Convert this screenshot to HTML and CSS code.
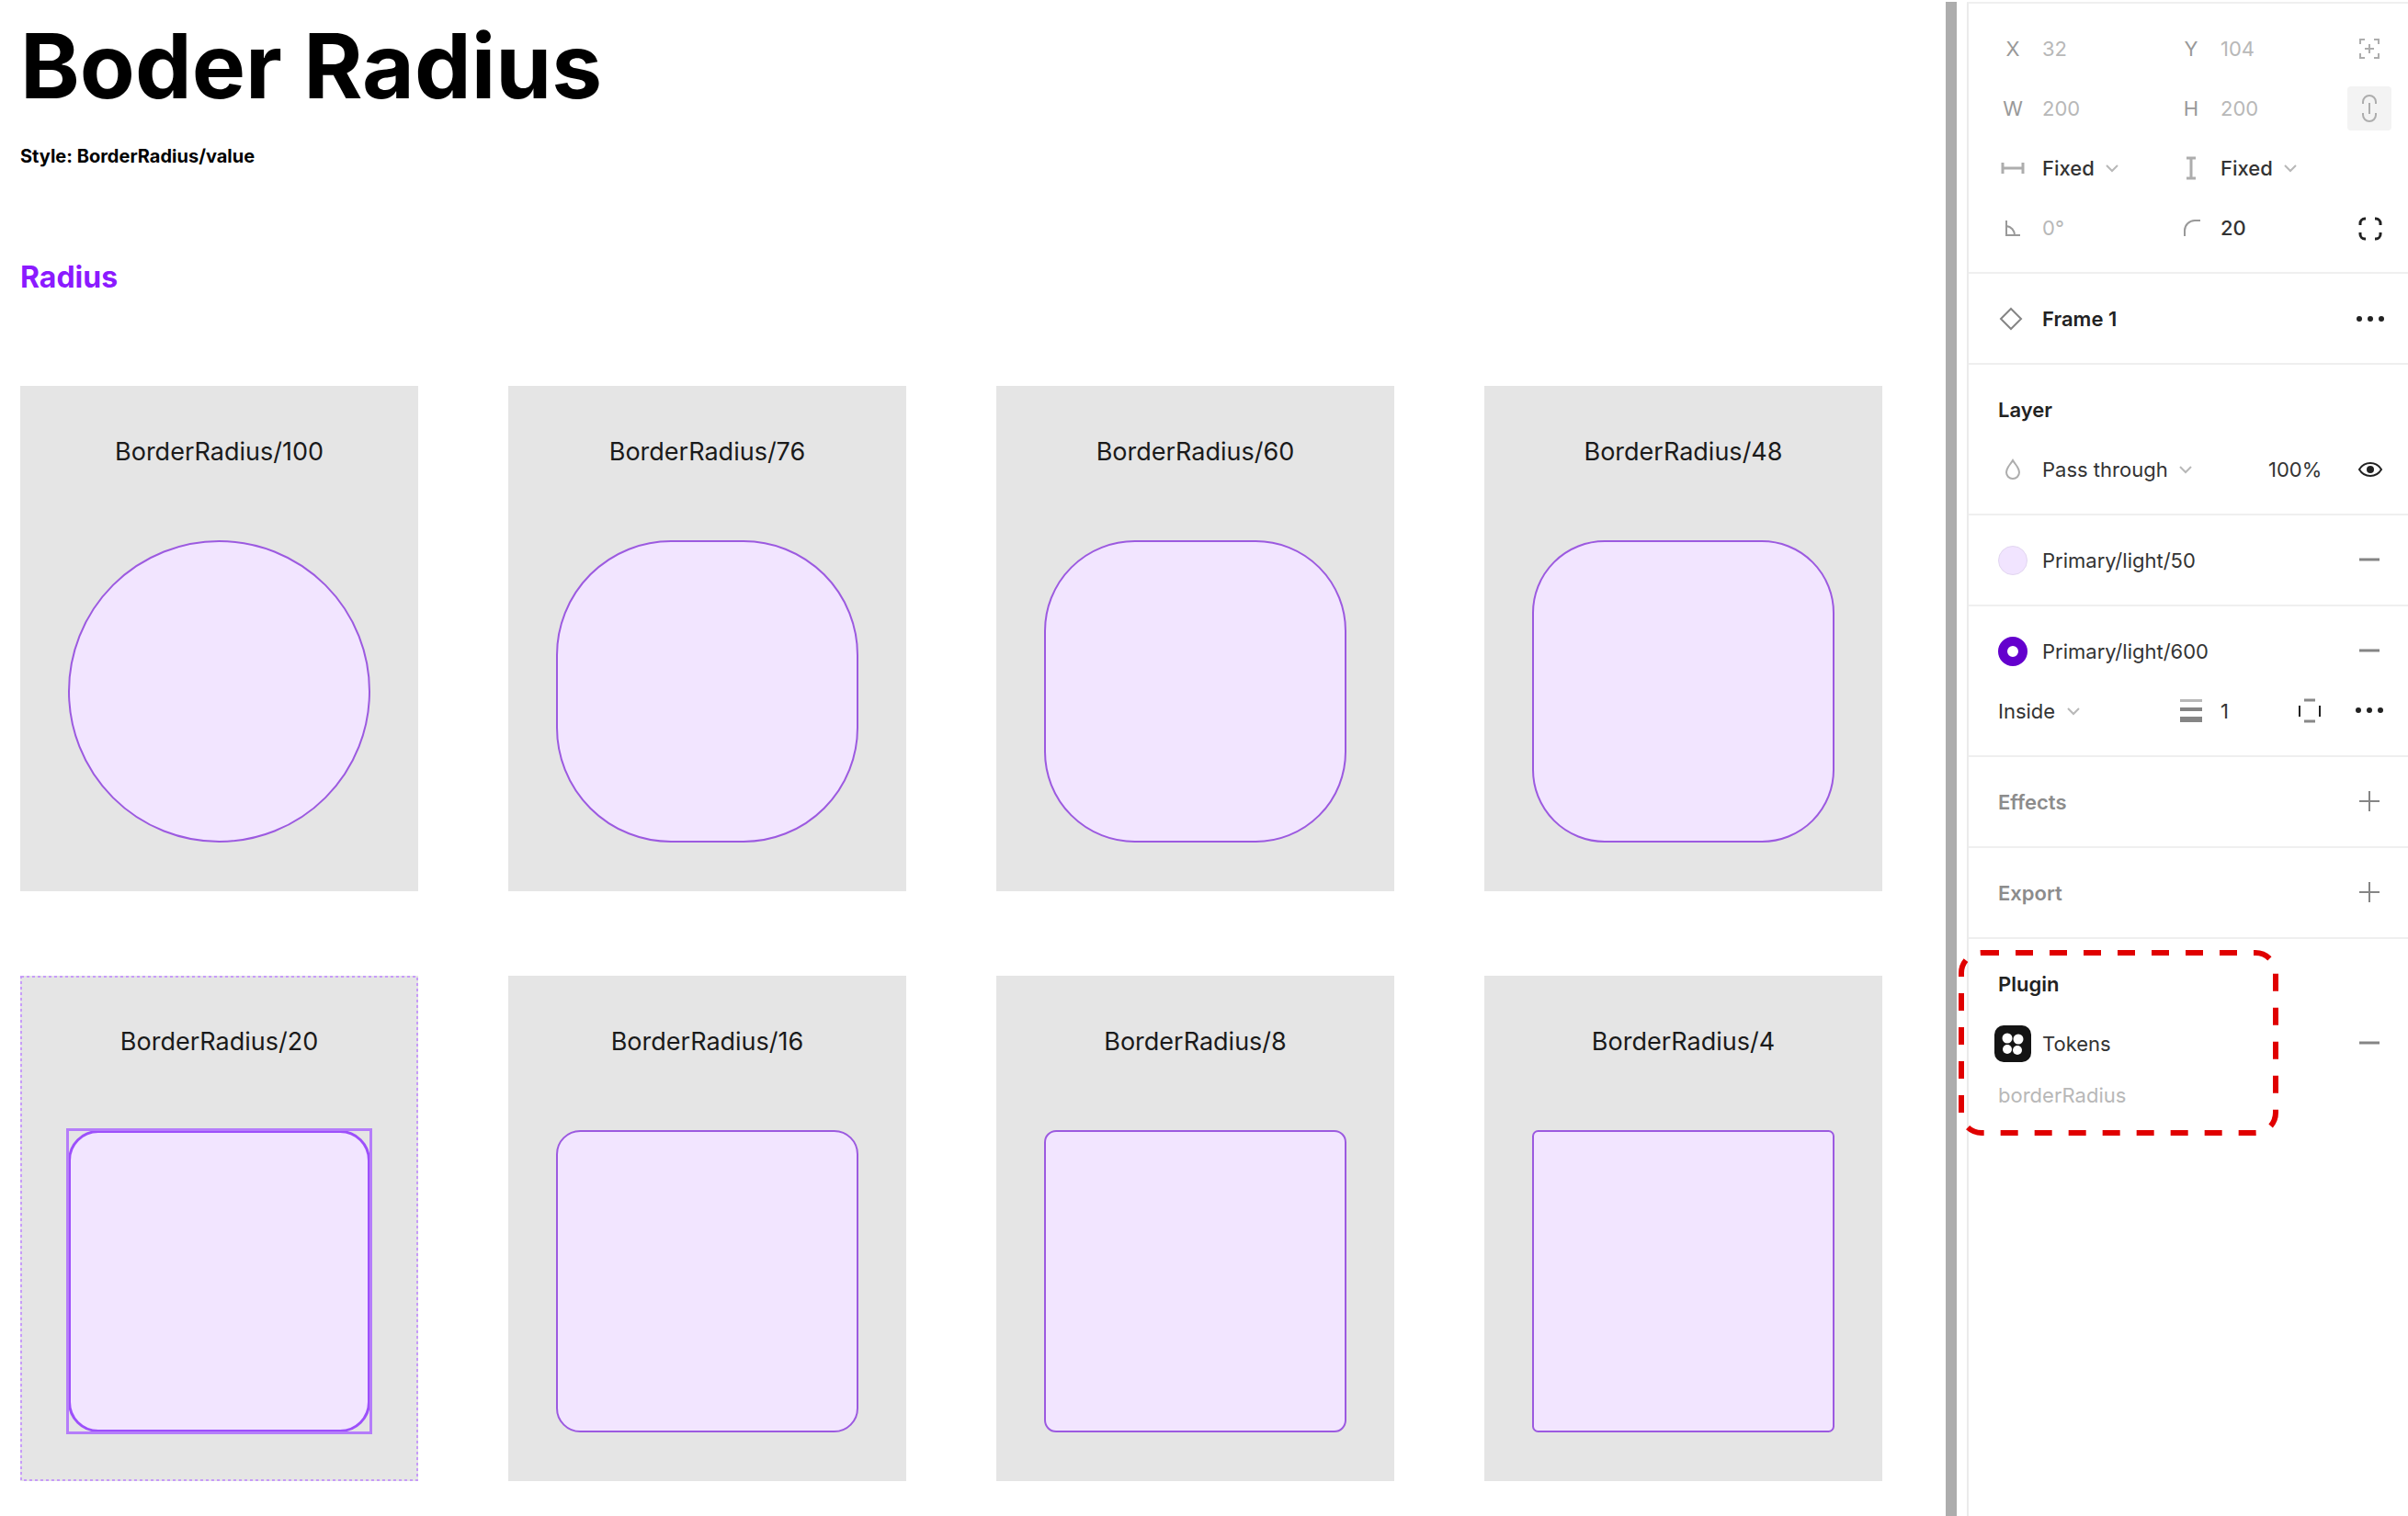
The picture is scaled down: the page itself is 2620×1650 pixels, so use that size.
FILE: index.html
```html
<!DOCTYPE html>
<html lang="en">
<head>
<meta charset="utf-8">
<meta name="viewport" content="width=device-width, initial-scale=1">
<title>Boder Radius</title>
<link rel="stylesheet" href="styles.css">
</head>
<body>
<div class="workspace">
  <main class="canvas">
    <h1 class="title">Boder Radius</h1>
    <p class="style-name">Style: BorderRadius/value</p>
    <h2 class="group-title">Radius</h2>
    <div class="cards">
      <article class="card"><h3 class="card-label">BorderRadius/100</h3><div class="shape r100"></div></article>
      <article class="card"><h3 class="card-label">BorderRadius/76</h3><div class="shape r76"></div></article>
      <article class="card"><h3 class="card-label">BorderRadius/60</h3><div class="shape r60"></div></article>
      <article class="card"><h3 class="card-label">BorderRadius/48</h3><div class="shape r48"></div></article>
      <article class="card card-selected">
        <h3 class="card-label">BorderRadius/20</h3>
        <div class="selection"><div class="shape shape-selected r20"></div></div>
        <svg class="card-outline" aria-hidden="true"><rect x="1" y="1"/></svg>
      </article>
      <article class="card"><h3 class="card-label">BorderRadius/16</h3><div class="shape r16"></div></article>
      <article class="card"><h3 class="card-label">BorderRadius/8</h3><div class="shape r8"></div></article>
      <article class="card"><h3 class="card-label">BorderRadius/4</h3><div class="shape r4"></div></article>
    </div>
  </main>
  <div class="divider"></div>
  <aside class="panel">
    <section class="section">
      <div class="row">
        <label class="field"><span class="mark">X</span><input class="value muted" value="32"></label>
        <label class="field"><span class="mark">Y</span><input class="value muted" value="104"></label>
        <button class="icon-button faint" aria-label="Absolute position"><svg class="icon" viewBox="0 0 48 48"><path d="M14 19v-5h5M29 14h5v5M34 29v5h-5M19 34h-5v-5M24 19v10M19 24h10"/></svg></button>
      </div>
      <div class="row">
        <label class="field"><span class="mark">W</span><input class="value muted" value="200"></label>
        <label class="field"><span class="mark">H</span><input class="value muted" value="200"></label>
        <button class="icon-button faint pressed" aria-label="Constrain proportions"><svg class="icon" viewBox="0 0 48 48"><path d="M17 19v-2a7 7 0 0 1 14 0v2M17 29v2a7 7 0 0 0 14 0v-2M24 18v12"/></svg></button>
      </div>
      <div class="row">
        <div class="field">
          <svg class="icon faint thick" viewBox="0 0 48 48"><path d="M13 18v12M35 18v12M13 24h22"/></svg>
          <select class="value choice" aria-label="Horizontal resizing"><option>Fixed</option></select>
          <svg class="chevron" viewBox="0 0 14 10"><path d="M1 2l6 6 6-6"/></svg>
        </div>
        <div class="field">
          <svg class="icon faint thick" viewBox="0 0 48 48"><path d="M19 13h10M19 35h10M24 13v22"/></svg>
          <select class="value choice" aria-label="Vertical resizing"><option>Fixed</option></select>
          <svg class="chevron" viewBox="0 0 14 10"><path d="M1 2l6 6 6-6"/></svg>
        </div>
      </div>
      <div class="row">
        <div class="field"><svg class="icon gray" viewBox="0 0 48 48"><path d="M17 16v16h15M17 22a10 10 0 0 1 9 10"/></svg><input class="value muted" aria-label="Rotation" value="0°"></div>
        <div class="field"><svg class="icon gray" viewBox="0 0 48 48"><path d="M17 33v-6a11 11 0 0 1 11-11h6"/></svg><input class="value medium" aria-label="Corner radius" value="20"></div>
        <button class="icon-button dark" aria-label="Independent corners"><svg class="icon thick" viewBox="0 0 48 48"><path d="M14 21v-2a5 5 0 0 1 5-5h1M30 14h1a5 5 0 0 1 5 5v2M36 29v2a5 5 0 0 1-5 5h-1M20 36h-1a5 5 0 0 1-5-5v-2"/></svg></button>
      </div>
    </section>

    <section class="section">
      <div class="row">
        <div class="field wide"><svg class="icon mid" viewBox="0 0 48 48"><path d="M22 13l11 11-11 11-11-11z"/></svg><h2 class="name">Frame 1</h2></div>
        <button class="icon-button dark" aria-label="Component options"><svg class="icon solid" viewBox="0 0 48 48"><circle cx="13" cy="24" r="3"/><circle cx="25" cy="24" r="3"/><circle cx="37" cy="24" r="3"/></svg></button>
      </div>
    </section>

    <section class="section">
      <div class="row"><h2 class="heading">Layer</h2></div>
      <div class="row">
        <div class="field wide">
          <svg class="icon faint" viewBox="0 0 48 48"><path d="M24 14c3 5 7 8 7 13a7 7 0 0 1-14 0c0-5 4-8 7-13z"/></svg>
          <select class="value choice regular" aria-label="Blend mode"><option>Pass through</option></select>
          <svg class="chevron" viewBox="0 0 14 10"><path d="M1 2l6 6 6-6"/></svg>
          <input class="value opacity" aria-label="Opacity" value="100%">
        </div>
        <button class="icon-button dark" aria-label="Toggle visibility"><svg class="icon" viewBox="0 0 48 48"><path d="M13 24c3-5 7-7 12-7s9 2 12 7c-3 5-7 7-12 7s-9-2-12-7z"/><circle class="dot" cx="25" cy="24" r="4"/></svg></button>
      </div>
    </section>

    <section class="section">
      <div class="row">
        <div class="field wide"><span class="swatch"><span class="fill-color"></span></span><span class="value">Primary/light/50</span></div>
        <button class="icon-button mid" aria-label="Remove fill"><svg class="icon minus" viewBox="0 0 48 48"><path d="M13 23h22"/></svg></button>
      </div>
    </section>

    <section class="section">
      <div class="row">
        <div class="field wide"><span class="swatch"><span class="stroke-color"></span></span><span class="value">Primary/light/600</span></div>
        <button class="icon-button mid" aria-label="Remove stroke"><svg class="icon minus" viewBox="0 0 48 48"><path d="M13 23h22"/></svg></button>
      </div>
      <div class="row">
        <div class="field inset">
          <select class="value choice regular" aria-label="Stroke position"><option>Inside</option></select>
          <svg class="chevron" viewBox="0 0 14 10"><path d="M1 2l6 6 6-6"/></svg>
        </div>
        <div class="field stroke-field">
          <svg class="icon solid mid" viewBox="0 0 48 48"><path class="light" d="M12 11h24v3H12z"/><path d="M12 20h24v4H12zM12 30h24v6H12z"/></svg>
          <input class="value" aria-label="Stroke weight" value="1">
          <button class="icon-button dark" aria-label="Stroke per side"><svg class="icon" viewBox="0 0 48 48"><path d="M13 18v12M35 18v12"/><path class="soft" d="M18 12h12M18 35h12"/></svg></button>
        </div>
        <button class="icon-button dark" aria-label="Stroke options"><svg class="icon solid" viewBox="0 0 48 48"><circle cx="12" cy="23" r="3"/><circle cx="24" cy="23" r="3"/><circle cx="36" cy="23" r="3"/></svg></button>
      </div>
    </section>

    <section class="section">
      <div class="row">
        <h2 class="heading inactive">Effects</h2>
        <button class="icon-button mid" aria-label="Add effect"><svg class="icon" viewBox="0 0 48 48"><path d="M24 12v22M13 23h22"/></svg></button>
      </div>
    </section>

    <section class="section">
      <div class="row">
        <h2 class="heading inactive">Export</h2>
        <button class="icon-button mid" aria-label="Add export"><svg class="icon" viewBox="0 0 48 48"><path d="M24 12v22M13 23h22"/></svg></button>
      </div>
    </section>

    <section class="section plugin">
      <div class="row"><h2 class="heading">Plugin</h2></div>
      <div class="row">
        <div class="field wide">
          <svg class="icon logo" viewBox="0 0 48 48"><rect x="4" y="4" width="40" height="40" rx="10"/><g><circle cx="18" cy="18" r="5.5"/><circle cx="30" cy="19" r="5.5"/><circle cx="18" cy="30" r="5"/><circle cx="29" cy="31" r="5"/></g></svg>
          <span class="value">Tokens</span>
        </div>
        <button class="icon-button mid" aria-label="Remove plugin data"><svg class="icon minus" viewBox="0 0 48 48"><path d="M13 23h22"/></svg></button>
      </div>
      <p class="plugin-note">borderRadius</p>
      <svg class="callout" viewBox="0 0 348 202" aria-hidden="true"><rect x="3" y="3" width="342" height="196" rx="22"/></svg>
    </section>
  </aside>
</div>
</body>
</html>
```

FILE: styles.css
```css
* {
  box-sizing: border-box;
}

body {
  margin: 0;
  background: #fff;
  color: #000;
  font-family: Inter, "Liberation Sans", sans-serif;
}

h1, h2, h3, p {
  margin: 0;
}

.workspace {
  display: grid;
  grid-template-columns: minmax(0, 1fr) 12px 491px;
  min-height: 100vh;
}

/* Canvas */

.canvas {
  padding: 12px 69px 36px 22px;
}

.title {
  font-size: 98px;
  line-height: 120px;
  font-weight: 700;
}

.style-name {
  margin-top: 24px;
  font-size: 20px;
  line-height: 28px;
  font-weight: 700;
}

.group-title {
  margin-top: 98px;
  color: #8b1aff;
  font-size: 32px;
  line-height: 40px;
  font-weight: 700;
}

.cards {
  display: grid;
  grid-template-columns: repeat(4, minmax(0, 1fr));
  gap: 92px 98px;
  margin-top: 98px;
}

.card {
  padding: 52px 52px 53px;
  background: #e5e5e5;
}

.card-label {
  margin-bottom: 76px;
  color: #1a1a1a;
  font-size: 27px;
  line-height: 40px;
  font-weight: 400;
  text-align: center;
}

.shape {
  aspect-ratio: 1;
  border: 2px solid #9c5ae0;
  background: #f2e5ff;
}

.r100 { border-radius: 50%; }
.r76 { border-radius: 38%; }
.r60 { border-radius: 30%; }
.r48 { border-radius: 24%; }
.r20 { border-radius: 10%; }
.r16 { border-radius: 8%; }
.r8 { border-radius: 4%; }
.r4 { border-radius: 2%; }

.card-selected {
  position: relative;
}

.selection {
  outline: 3px solid #b57dfa;
  outline-offset: -1px;
}

.shape-selected {
  border: 3px solid #9d50fb;
}

.card-outline {
  position: absolute;
  inset: 0;
  width: 100%;
  height: 100%;
}

.card-outline rect {
  width: calc(100% - 2px);
  height: calc(100% - 2px);
  fill: none;
  stroke: #c79cf8;
  stroke-width: 2;
  stroke-dasharray: 3 3;
}

/* Divider and side panel */

.divider {
  margin-top: 2px;
  background: #adadad;
}

.panel {
  margin: 2px 0 0 11px;
  border-left: 2px solid #ebebeb;
  border-top: 2px solid #efefef;
  color: #333;
  font-size: 22px;
}

.section {
  padding: 16px 18px 16px 24px;
  border-bottom: 2px solid #efefef;
}

.row {
  display: grid;
  grid-template-columns: 194px 194px 48px;
  align-items: center;
  height: 65px;
}

.field {
  display: flex;
  align-items: center;
  gap: 8px;
  min-width: 0;
}

.wide,
.heading {
  grid-column: span 2;
}

.inset,
.heading {
  padding-left: 8px;
}

.heading,
.name {
  color: #222;
  font-size: 22px;
  line-height: 32px;
  font-weight: 600;
}

.inactive {
  color: #8c8c8c;
}

.mark {
  flex: none;
  width: 48px;
  color: #999;
  text-align: center;
}

.value {
  min-width: 0;
  margin: 0;
  padding: 0;
  border: 0;
  background: none;
  color: #333;
  font: inherit;
  line-height: 32px;
}

input.value {
  flex: 1;
  width: 0;
}

.medium,
.choice {
  font-weight: 500;
}

.regular {
  font-weight: 400;
}

.choice {
  appearance: none;
}

.value.muted {
  color: #b8b8b8;
}

input.opacity {
  flex: none;
  width: 86px;
  margin-left: auto;
}

.chevron {
  width: 14px;
  height: 10px;
  margin-left: 4px;
  fill: none;
  stroke: #b8b8b8;
  stroke-width: 2;
}

.icon-button {
  width: 48px;
  height: 48px;
  padding: 0;
  border: 0;
  border-radius: 4px;
  background: none;
}

.pressed {
  background: #f3f3f3;
}

.icon {
  display: block;
  flex: none;
  width: 48px;
  height: 48px;
  fill: none;
  stroke: currentColor;
  stroke-width: 2;
}

.faint { color: #adadad; }
.gray { color: #999; }
.mid { color: #858585; }
.dark { color: #222; }

.thick,
.minus {
  stroke-width: 3;
}

.solid {
  fill: currentColor;
  stroke: none;
}

.dot {
  fill: currentColor;
  stroke: none;
}

.light {
  fill: #b8b8b8;
}

.soft {
  stroke: #888;
  stroke-width: 3;
}

.stroke-field .icon-button {
  margin-right: 17px;
}

.swatch {
  display: grid;
  flex: none;
  place-items: center;
  width: 48px;
}

.fill-color,
.stroke-color {
  width: 32px;
  height: 32px;
  border: 1px solid #e2d6f0;
  border-radius: 50%;
  background: #f1e4ff;
}

.stroke-color {
  border: 10px solid #6400cd;
  background: #fff;
}

.plugin {
  position: relative;
  border-bottom: 0;
}

.plugin-note {
  padding: 8px 0 0 8px;
  color: #b8b8b8;
  line-height: 32px;
}

.logo {
  fill: #141414;
  stroke: none;
}

.logo g {
  fill: #fff;
}

.callout {
  position: absolute;
  top: 12px;
  left: -11px;
  width: 348px;
  height: 202px;
  fill: none;
  stroke: #e00000;
  stroke-width: 6;
  stroke-dasharray: 19 18;
}
```
